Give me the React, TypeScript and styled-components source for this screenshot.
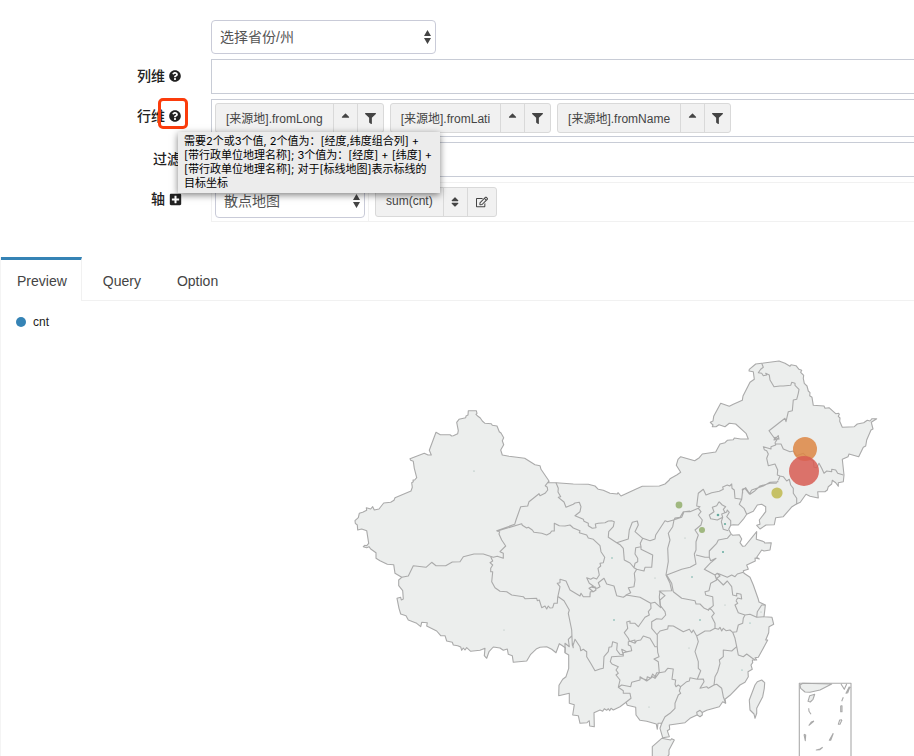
import React from "react";
import styled, { createGlobalStyle } from "styled-components";
import { FaQuestionCircle, FaPlusSquare, FaFilter, FaSort, FaSortUp, FaRegEdit } from "react-icons/fa";

const GlobalStyle = createGlobalStyle`
  * { box-sizing: border-box; }
  body {
    margin: 0;
    background: #fff;
    color: #333;
    font: 14px/20px "Liberation Sans", "Noto Sans CJK SC", sans-serif;
    overflow-x: hidden;
  }
  button, select { font-family: inherit; }
`;

const Page = styled.main`
  padding-top: 20px;
`;

const Form = styled.form`
  display: flex;
  flex-direction: column;
  gap: 5px;
  margin-bottom: 35px;
`;

const Row = styled.div`
  display: grid;
  grid-template-columns: 181px minmax(0, 1fr);
  column-gap: 30px;
  align-items: start;
`;

const RowLabel = styled.div`
  display: flex;
  justify-content: flex-end;
  align-items: center;
  gap: 4px;
  padding-top: 7px;
  font-weight: 500;
  color: #222;
`;

const HelpAnchor = styled.span`
  position: relative;
  display: flex;
`;

const IconButton = styled.button`
  display: flex;
  padding: 0;
  border: 0;
  background: none;
  color: #222;
  font-size: 12px;
`;

const PlusButton = styled(IconButton)`
  font-size: 13px;
  margin-right: -1px;
`;

const Highlight = styled.span`
  position: absolute;
  top: -12px;
  left: -11px;
  width: 30px;
  height: 31px;
  border: 3px solid #fb3c0c;
  border-radius: 5px;
  pointer-events: none;
`;

const Tooltip = styled.div`
  position: absolute;
  z-index: 2;
  top: 22px;
  left: 9px;
  padding: 2px 0 3px 6px;
  width: 262px;
  background: #ececec;
  box-shadow: 0 2px 7px rgba(0, 0, 0, 0.5);
  color: #000;
  font: 11px/14px Inter, "Noto Sans CJK SC", sans-serif;
  white-space: nowrap;
`;

const SelectBox = styled.div<{ $width: number }>`
  position: relative;
  width: ${(p) => p.$width}px;
  height: 34px;
`;

const Select = styled.select`
  appearance: none;
  width: 100%;
  height: 100%;
  padding: 0 24px 0 8px;
  border: 1px solid #c9cbd8;
  border-radius: 4px;
  background: #fff;
  color: #555;
  font-size: 14px;
`;

const SelectArrows = styled.svg`
  position: absolute;
  top: 10px;
  right: 5px;
  width: 7px;
  height: 14px;
  fill: #444;
  pointer-events: none;
`;

const DropZone = styled.div<{ $filled?: boolean }>`
  display: flex;
  gap: 6px;
  height: ${(p) => (p.$filled ? 38 : 35)}px;
  padding: 3px;
  border: 1px solid #c8ccd6;
  border-right: 0;
`;

const AxisBox = styled.div`
  display: flex;
  height: 40px;
  border: 1px solid #f1f1f1;
  border-right: 0;
`;

const AxisCell = styled.div<{ $divided?: boolean }>`
  display: flex;
  padding: ${(p) => (p.$divided ? "1px 3px" : "4px 6px")};
  border-right: ${(p) => (p.$divided ? "1px solid #f1f1f1" : "0")};
`;

const Chip = styled.div`
  display: flex;
  height: 30px;
  border: 1px solid #d9d9d9;
  border-radius: 3px;
  background: #f1f1f1;
`;

const ChipButton = styled.button<{ $width?: number }>`
  display: flex;
  align-items: center;
  justify-content: center;
  width: ${(p) => (p.$width ? `${p.$width}px` : "auto")};
  padding: ${(p) => (p.$width ? "0" : "0 10px 2px")};
  border: 0;
  border-left: 1px solid #d9d9d9;
  background: none;
  color: #444;
  font-size: 12px;
  white-space: nowrap;
  &:first-child { border-left: 0; }
`;

const Panel = styled.section`
  border-left: 1px solid #f4f4f4;
`;

const Tabs = styled.div`
  display: flex;
  gap: 5px;
  border-bottom: 1px solid #f1f1f1;
`;

const Tab = styled.button<{ $active?: boolean }>`
  height: 44px;
  margin-bottom: -1px;
  padding: 1px 14px 0 16px;
  border: 0;
  border-top: 3px solid ${(p) => (p.$active ? "#3583b5" : "transparent")};
  border-right: 1px solid ${(p) => (p.$active ? "#f1f1f1" : "transparent")};
  background: ${(p) => (p.$active ? "#fff" : "transparent")};
  color: #444;
  font-size: 14px;
`;

const Legend = styled.div`
  display: flex;
  align-items: center;
  gap: 7px;
  height: 39px;
  padding: 3px 15px 0;
  color: #222;
  font-size: 12px;
`;

const LegendDot = styled.span`
  width: 10px;
  height: 10px;
  border-radius: 50%;
  background: #3583b5;
`;

const MapChart = styled.svg`
  display: block;
  width: 100%;
  height: auto;
`;

type Run = [number, number, string];

/* Every border run is stored at triple scale relative to its own sheet origin. */
const project = ([ox, oy, pts]: Run) =>
  pts
    .trim()
    .split(/\s+/)
    .map((p) => {
      const [x, y] = p.split(",").map(Number);
      return `${(ox + x / 3).toFixed(1)} ${(oy + y / 3).toFixed(1)}`;
    })
    .join("L");

const W: [number, number] = [350, 400];
const SW: [number, number] = [380, 540];
const C: [number, number] = [540, 480];
const NE: [number, number] = [670, 350];
const E: [number, number] = [640, 470];
const S: [number, number] = [540, 580];
const SE: [number, number] = [640, 580];
const INSET: [number, number] = [780, 670];

const outline: Run[] = [
  [...W, "15,362 25,353 28,340 38,337 50,331 49,323 62,327 68,320 73,330 87,327 101,309 122,307 132,301 135,293 183,273 187,262 185,248 190,245 189,240 194,240 200,233 193,205 190,184 182,181 180,176 223,160 234,165 244,165 238,151 258,97 271,104 300,104 305,108 310,107 323,101 325,92 320,67 327,58 347,53 348,48 354,45 355,32 379,32 381,40 378,43 384,49 391,54 397,63 405,70 424,71 427,76 441,78 448,95 453,99 461,113 457,122 461,134 452,150 457,165 477,169 524,175 555,194 570,197 573,208 597,243"],
  [...C, "25,8 48,8 100,12 145,13 165,18 175,28 190,31 210,40 232,42 234,38 243,48 290,26 307,19 358,18 375,12 388,0"],
  [...NE, "0,386 20,375 32,367 19,346 24,328 32,320 74,332 88,323 97,312 137,306 150,282 165,278 172,271 190,269 193,264 212,267 235,267 228,250 197,222 178,220 165,230 147,224 138,230 127,230 129,225 121,217 129,213 131,199 152,160 178,169 190,163 217,151 219,138 240,97 253,88 250,65 237,63 238,58 257,42 275,40 327,33 345,40 360,49 363,44 378,47 387,58 395,61 392,67 401,76 400,85 403,100 411,108 415,123 420,128 419,137 426,142 430,166 462,168 465,175 477,173 497,191 506,190 508,193 505,199 510,204 509,214 517,232 553,230 562,222 581,218 592,211 600,213 606,206 620,206 604,217 609,237 603,240 590,270 587,288 580,292 566,320 537,312 534,320 517,328 522,375 520,395 505,398 505,409 497,398 487,391 485,402 475,410 472,420 465,425 443,425 445,444 420,439 408,433 391,457 378,463 366,470 340,500 317,503 313,524 288,525 270,537 260,526 270,523 268,510 287,485 287,470 275,463 262,465 250,484 230,493 222,505 205,525 190,524"],
  [...E, "272,166 266,178 272,190 278,196 298,194 305,207 300,218 308,229 315,228 350,185 349,208 372,215 374,219 394,218 390,240 372,243 365,240 350,262 358,267 345,264 346,273 320,285 325,298 310,302 312,310 330,322 340,345 355,388"],
  [...SE, "357,66 376,75 375,85 372,110 396,112 401,133 387,140 386,158 377,180 383,180 375,195 355,232 345,233 350,240 337,240 338,248 333,255 337,268 324,275 325,290 315,307 300,315 270,346 255,358 257,370 248,365 238,380 200,391 185,398 150,415 135,428 88,435 89,448 82,452 88,470 68,473 60,445 65,430 54,430 52,448 49,432 20,424 0,421"],
  [...S, "288,405 287,382 262,376 258,367 240,380 220,390 213,385 209,392 205,386 200,391 193,386 188,394 180,390 162,398 163,440 149,438 148,422 141,428 120,430 115,407 98,405 103,374 88,370 88,340 56,347 57,316 68,298 78,290 86,265 86,225 75,218 76,203 65,196 58,191 48,218 35,208 20,200 0,202"],
  [...SW, "470,326 452,343 440,363 400,367 397,347 385,343 382,327 370,331 360,324 340,321 327,335 320,355 313,347 315,325 300,331 272,334 260,323 255,330 250,324 245,331 242,321 233,317 220,315 217,307 200,303 195,287 182,287 170,273 140,258 142,248 125,247 122,260 110,250 85,240 78,227 62,222 57,205 51,175 62,172 64,180 70,177 68,152 56,137 56,120 65,112 45,100 41,74 22,73 0,62"],
  [...W, "78,475 78,458 62,447 57,440 50,443 40,440 44,436 50,437 56,430 50,392 35,387 23,390 22,375 16,370"],
];

const borders: Run[] = [
  [...W, "155,532 175,528 190,497 228,502 245,487 258,497 287,497 307,486 330,485 340,470 372,462 400,462 430,472 442,469 460,475 460,460 450,455 467,438 455,420 447,402 449,395 440,392 494,373 498,360 512,320 533,318 537,305 567,281 570,287 585,280 593,270 592,262 586,257 597,243"],
  [...W, "440,394 515,371 517,376 530,384 535,382 547,390 552,397 575,400 590,405 600,400"],
  [...C, "30,160 35,153 43,153 43,130 58,137 75,138 90,135 100,144 120,152 118,158 140,165 145,174 160,178 180,197 183,215 194,232 190,248 180,250 182,258 174,265 178,285 170,297 160,293 152,298 140,293 148,310 160,318 147,325 160,335 168,330 165,320 155,322 172,325 180,320 175,308 192,295 200,312 222,318 230,347 250,352 260,345"],
  [...C, "48,8 55,25 54,36 62,50 55,52 72,66 78,82 100,73 105,69 118,67 123,80 120,95 105,107 130,118 132,124 145,130 145,137 157,145 168,143 166,132 175,130 195,128 205,123 215,122 223,125 220,140 206,155 205,172 230,188 265,177 268,150 277,127 292,123 295,135 285,155 308,175 330,182 345,177 347,165 375,122 383,125 400,120 425,112 432,95 450,93"],
  [...C, "230,188 240,194 250,205 253,240 270,249 282,263 285,250 293,245 293,235 285,222 287,203 303,200 301,190 308,175"],
  [...C, "303,200 303,208 338,225 335,262 315,262 312,273 290,268 282,263"],
  [...C, "290,268 283,280 285,300 282,320 265,323 272,338 258,345 300,352 332,370 345,367 362,383 360,360 375,347 358,333 395,332 390,310 378,285 385,245 383,205 390,180 385,160 398,140 402,120"],
  [...E, "102,150 105,144 120,142 130,125 150,125 175,115 183,125 175,135 187,150 183,165 165,180 175,195 168,215 168,240 163,252 168,282 150,292 125,298 80,315"],
  [...E, "175,115 180,110 170,108 175,70 190,58 198,75 215,68 238,64 250,58 248,51 262,45 269,48 275,42 276,55 283,60 285,85 305,88 298,103 312,115 320,133"],
  [...E, "305,88 308,60 317,53 330,73 345,62 360,48 390,40 408,40 415,32"],
  [...E, "237,95 247,105 257,110 250,118 255,128 245,132 248,142 232,150 212,146 208,135 222,125 217,112 230,107 237,95"],
  [...E, "255,128 260,126 262,120 268,127 260,140 272,152 272,166"],
  [...E, "248,142 244,155 250,178 265,182"],
  [...E, "168,255 195,262 208,262 208,243 230,220 235,210 262,205 272,193"],
  [...E, "208,262 212,272 228,265 210,280 193,298 225,315 232,310 240,313 262,322 275,315 285,320 292,312 310,307"],
  [...E, "80,315 95,340 100,365 125,385 165,392 168,402 180,402 193,415 205,420 220,407 218,380 197,375 195,365 207,362 212,340 230,330 225,315"],
  [...E, "232,310 240,318 230,325 250,345 262,333 275,350 278,375 290,378 290,370 303,373 305,387 293,384 288,392"],
  [...SE, "288,62 293,70 285,75 295,98 315,105 330,103 350,112 352,95 365,75 376,75"],
  [...SE, "350,112 372,110"],
  [...SE, "315,105 310,115 308,130 295,135 290,155 278,157"],
  [...SE, "205,92 208,85 215,90 223,100 215,110 225,130 225,145 235,148 240,142 245,153 250,145 258,152 270,150 278,157 285,175 290,200 275,213 250,210 250,230 238,240 240,250 233,275 225,290 222,315"],
  [...SE, "290,200 295,225 310,230 320,222 335,233 345,240"],
  [...SE, "222,315 230,313 245,325 250,350 257,370"],
  [...SE, "225,145 210,153 195,153 170,168 175,185 165,215 175,245 175,265 182,272 172,298 190,297 192,305 180,325 200,320 205,325 222,315"],
  [...SE, "172,298 150,293 148,303 140,305 122,320 115,315 108,320 105,313 107,300 96,298 100,267 83,265 75,275 58,278"],
  [...SE, "122,320 118,333 122,340 115,345 105,370 105,385 90,400 75,410 65,430"],
  [...SE, "170,168 160,150 155,158 148,148 130,155 100,138 85,137 83,147 60,153 50,165"],
  [...SE, "60,32 58,50 60,75 75,95 77,105 65,118 50,116 35,125 35,145 52,165 52,198 53,217 57,230 42,237 55,245 58,278 50,278 45,290 38,282 32,295 22,290 20,300 0,293"],
  [...S, "332,70 333,85 325,95 328,105 315,112 295,140 285,130 270,130 270,123 260,126 263,145 253,158 265,175 268,183 285,190 290,182 302,180 310,168 330,175 345,200 352,200"],
  [...S, "285,190 285,180 265,185 265,195 272,198 275,212 260,215 245,208 250,225 240,223 230,210 232,190 218,185 215,200 207,202 205,215 192,230 190,265 180,267 165,272 152,250 140,230 140,215 130,208 122,212 120,200 105,178 98,200"],
  [...S, "275,212 250,218 250,228 215,230 211,245 216,252 235,260 228,270 235,280 228,285 240,300 235,322 245,315 272,320 275,307 300,300 300,290 320,303 338,290 345,295 358,278"],
  [...S, "240,300 235,322 250,332 250,340 270,340 273,355 258,367"],
  [...S, "55,50 72,62 88,90 85,100 95,150 97,195 100,203 98,190"],
  [...S, "95,168 85,178 88,200 75,190 75,218"],
  [...SW, "332,50 338,63 330,68 338,75 332,85 332,95 338,95 335,125 345,143 360,154 380,155 395,165 430,170 435,176 470,175 472,182 478,180 485,203 495,198 500,207 505,198 510,204 518,203 522,190 532,190 533,172 540,140 532,130 540,128 540,118 558,123 570,150 600,168 603,160 610,170 630,170 630,160"],
  [...C, "150,348 151,335 160,335"],
  [...NE, "275,40 280,52 272,58 265,68 275,70 280,77 290,75 287,70 298,75 300,90 312,110 330,108 340,108 362,106 365,97 375,100 375,106 387,118 385,130 380,148 370,150 367,182 355,185 348,215 345,205 297,242 315,267 325,257 327,268 315,262 312,270 322,268 315,278"],
  [...NE, "315,282 333,282 340,297 360,305 370,303 380,317 400,310 415,325 430,333 432,352 440,353 447,340 455,355 462,370 470,363 485,365 485,358 497,360 503,370 520,375"],
  [...NE, "315,278 317,285 303,290 303,297 280,290 283,299 290,302 295,312 290,325 295,347 315,342 323,360 322,375 330,378 325,390"],
  [...NE, "325,395 300,397 280,408 245,420 238,432 225,415 217,418 218,430"],
  [...NE, "330,378 340,380 350,393 358,388 362,405 370,415 370,430 380,445 380,463"],
];

const islands: Run[] = [
  [...SE, "365,300 374,308 373,325 368,350 350,385 350,400 345,415 342,402 330,390 328,360 345,315 352,305"],
  [...SE, "37,500 65,475 92,480 95,476 103,480 87,510 87,524 78,535 70,550 37,550"],
  [...SE, "170,397 180,391 187,398 187,405 180,410 172,405"],
  [...INSET, "60,45 68,40 155,42 120,60 90,67 75,66 62,55"],
  [...INSET, "89,77 104,73 99,88 91,96 84,94"],
];

const insetLines: Run[] = [
  [...INSET, "58,275 58,40 213,40 213,275"],
  [...INSET, "183,42 193,58 200,42"],
  [...INSET, "210,50 203,68 198,70 208,50"],
  [...INSET, "190,82 185,94"],
  [...INSET, "182,107 186,107 186,125 182,125 182,107"],
  [...INSET, "186,149 179,150 175,163 180,163 186,149"],
  [...INSET, "160,190 148,211 152,211 160,190"],
  [...INSET, "128,232 120,237 109,240 120,239 128,232"],
  [...INSET, "72,193 76,212 77,195 72,193"],
  [...INSET, "102,153 94,156 87,166 102,153"],
  [...INSET, "86,115 87,124 93,133"],
];

const land = `M${outline.map(project).join("L")}Z`;
const islandPaths = islands.map((r) => `M${project(r)}Z`).join("");
const borderPaths = borders.map((r) => `M${project(r)}`).join("");
const insetPaths = insetLines.map((r) => `M${project(r)}`).join("");

const points = [
  { x: 805, y: 449, r: 12, color: "#dd8643" },
  { x: 804, y: 471, r: 15, color: "#d85c52" },
  { x: 777, y: 493, r: 5.6, color: "#bfb94e" },
  { x: 679, y: 505, r: 3.4, color: "#93ae6c" },
  { x: 702, y: 530, r: 3, color: "#93ae6c" },
  { x: 718, y: 515, r: 1.3, color: "#4f9f90" },
  { x: 725, y: 524, r: 1.1, color: "#4f9f90" },
  { x: 723, y: 552, r: 1, color: "#4f9f90" },
  { x: 614, y: 620, r: 0.8, color: "#4f9f90" },
  { x: 700, y: 620, r: 0.8, color: "#4f9f90" },
  { x: 692, y: 577, r: 0.8, color: "#4f9f90" },
  { x: 612, y: 558, r: 0.7, color: "#4f9f90" },
  { x: 742, y: 670, r: 0.6, color: "#4f9f90" },
  { x: 750, y: 623, r: 0.6, color: "#4f9f90" },
  { x: 474, y: 471, r: 0.6, color: "#7a9d97" },
  { x: 504, y: 630, r: 0.5, color: "#8fa5a0" },
  { x: 655, y: 578, r: 0.5, color: "#8fa5a0" },
  { x: 685, y: 538, r: 0.5, color: "#8fa5a0" },
  { x: 725, y: 605, r: 0.5, color: "#8fa5a0" },
  { x: 761, y: 612, r: 0.5, color: "#8fa5a0" },
  { x: 649, y: 707, r: 0.5, color: "#8fa5a0" },
  { x: 689, y: 648, r: 0.5, color: "#8fa5a0" },
];

const rowFields = ["[来源地].fromLong", "[来源地].fromLati", "[来源地].fromName"];

function Dropdown({ label, value, width }: { label: string; value: string; width: number }) {
  return (
    <SelectBox $width={width}>
      <Select aria-label={label} defaultValue={value}>
        <option>{value}</option>
      </Select>
      <SelectArrows viewBox="0 0 7 14" aria-hidden="true">
        <path d="M0 6L3.5 0L7 6ZM0 8H7L3.5 14Z" />
      </SelectArrows>
    </SelectBox>
  );
}

function FieldChip({ name }: { name: string }) {
  return (
    <Chip>
      <ChipButton type="button">{name}</ChipButton>
      <ChipButton type="button" $width={24} aria-label="排序"><FaSortUp size={13} /></ChipButton>
      <ChipButton type="button" $width={26} aria-label="过滤"><FaFilter size={11} /></ChipButton>
    </Chip>
  );
}

export default function App() {
  return (
    <>
      <GlobalStyle />
      <Page>
        <Form>
          <Row>
            <span />
            <Dropdown label="省份/州" value="选择省份/州" width={225} />
          </Row>
          <Row>
            <RowLabel>
              列维
              <IconButton type="button" aria-label="列维说明"><FaQuestionCircle /></IconButton>
            </RowLabel>
            <DropZone />
          </Row>
          <Row>
            <RowLabel>
              行维
              <HelpAnchor>
                <IconButton type="button" aria-label="行维说明" aria-describedby="row-help"><FaQuestionCircle /></IconButton>
                <Highlight />
                <Tooltip role="tooltip" id="row-help">
                  需要2个或3个值, 2个值为：[经度,纬度组合列] +<br />
                  [带行政单位地理名称]; 3个值为：[经度] + [纬度] +<br />
                  [带行政单位地理名称]; 对于[标线地图]表示标线的<br />
                  目标坐标
                </Tooltip>
              </HelpAnchor>
            </RowLabel>
            <DropZone $filled>
              {rowFields.map((f) => <FieldChip key={f} name={f} />)}
            </DropZone>
          </Row>
          <Row>
            <RowLabel>过滤</RowLabel>
            <DropZone />
          </Row>
          <Row>
            <RowLabel>
              轴
              <PlusButton type="button" aria-label="添加轴"><FaPlusSquare /></PlusButton>
            </RowLabel>
            <AxisBox>
              <AxisCell $divided>
                <Dropdown label="图表类型" value="散点地图" width={150} />
              </AxisCell>
              <AxisCell>
                <Chip>
                  <ChipButton type="button">sum(cnt)</ChipButton>
                  <ChipButton type="button" $width={24} aria-label="排序"><FaSort size={12} /></ChipButton>
                  <ChipButton type="button" $width={29} aria-label="编辑"><FaRegEdit size={12} /></ChipButton>
                </Chip>
              </AxisCell>
            </AxisBox>
          </Row>
        </Form>
        <Panel>
          <Tabs role="tablist">
            <Tab type="button" role="tab" aria-selected="true" $active>Preview</Tab>
            <Tab type="button" role="tab" aria-selected="false">Query</Tab>
            <Tab type="button" role="tab" aria-selected="false">Option</Tab>
          </Tabs>
          <Legend><LegendDot />cnt</Legend>
          <MapChart viewBox="1 340 913 416" role="img" aria-label="散点地图">
            <g stroke="#aaa" strokeWidth="1.1" strokeLinejoin="round">
              <path d={land} fill="#eceeed" />
              <path d={islandPaths} fill="#eceeed" />
              <path d={borderPaths} fill="none" />
              <path d={insetPaths} fill="none" />
            </g>
            {points.map((p) => (
              <circle key={`${p.x}-${p.y}`} cx={p.x} cy={p.y} r={p.r} fill={p.color} fillOpacity="0.85" />
            ))}
          </MapChart>
        </Panel>
      </Page>
    </>
  );
}
